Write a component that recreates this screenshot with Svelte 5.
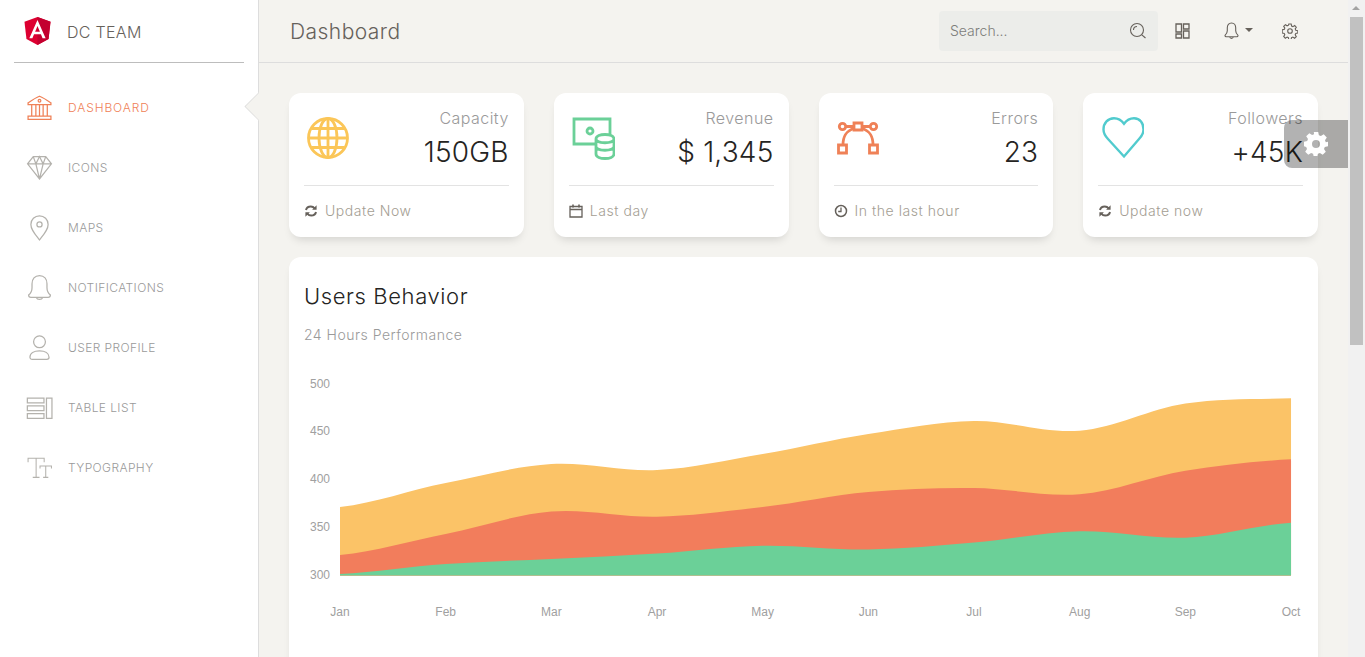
<script>
    const nav = ["Dashboard", "Icons", "Maps", "Notifications", "User Profile", "Table List", "Typography"]

    const stats = [
        { label: "Capacity", value: "150GB", foot: "Update Now", icon: "globe", footIcon: "refresh" },
        { label: "Revenue", value: "$ 1,345", foot: "Last day", icon: "money", footIcon: "calendar" },
        { label: "Errors", value: "23", foot: "In the last hour", icon: "vector", footIcon: "clock" },
        { label: "Followers", value: "+45K", foot: "Update now", icon: "heart", footIcon: "refresh" }
    ]

    const months = ["Jan", "Feb", "Mar", "Apr", "May", "Jun", "Jul", "Aug", "Sep", "Oct"]
    const ticks = [[500, 13], [450, 60.5], [400, 108.5], [350, 156.5], [300, 204.5]]

    // y positions of each stacked series, read off the picture
    const series = [
        { color: "#fbc367", ys: [137, 113, 94, 100, 84, 64, 51, 60.7, 33.5, 28.3] },
        { color: "#f27d5c", ys: [185, 164, 141.5, 146.7, 137, 122, 118, 124.3, 100.7, 89.3] },
        { color: "#6bd098", ys: [204, 194, 189, 183.5, 175.7, 179.5, 172.5, 161.3, 167.7, 152.7] }
    ]

    const stepX = 105.67
    const baseY = 205.5
    const pointX = i => 36 + i * stepX

    function area(ys) {
        let d = `M${pointX(0)} ${baseY}L${pointX(0)} ${ys[0]}`
        for (let i = 0; i < ys.length - 1; i++) {
            const prev = ys[Math.max(i - 1, 0)]
            const next = ys[Math.min(i + 2, ys.length - 1)]
            const c1 = ys[i] + (ys[i + 1] - prev) * 0.16
            const c2 = ys[i + 1] - (next - ys[i]) * 0.16
            d += `C${pointX(i) + stepX / 3} ${c1} ${pointX(i + 1) - stepX / 3} ${c2} ${pointX(i + 1)} ${ys[i + 1]}`
        }
        return d + `L${pointX(ys.length - 1)} ${baseY}Z`
    }
</script>

{#snippet navIcon(i)}
    <svg class="nav-icon" viewBox="0 0 26 26" fill="none" stroke="currentColor" stroke-width="1.2">
        {#if i === 0}
            <path d="M2 8.500C5 6.500 9 3.800 13 2.200c4 1.600 8 4.300 11 6.300v1.700H2zM3.500 21.200h19M2 24.400h22V21.200H2zM5.500 10.200v11M9.500 10.200v11M13 10.200v11M16.500 10.200v11M20.500 10.200v11"/>
            <circle cx="13" cy="6.500" r="1.300"/>
        {:else if i === 1}
            <path d="M7 2.500h12l5.500 7L13 24 1.500 9.500zM1.500 9.500h23M7 2.500l2.500 7L13 24l3.500-14.500 2.500-7M9.500 9.500 13 2.500l3.500 7"/>
        {:else if i === 2}
            <path d="M13 25C8 18.500 4.700 14.800 4.700 10a8.300 8.300 0 0 1 16.600 0c0 4.800-3.300 8.500-8.300 15z"/>
            <circle cx="13" cy="10" r="2.500"/>
        {:else if i === 3}
            <path d="M13 1.500c-4.600 0-7.200 3.500-7.200 8v3.800c0 3.200-1.300 5.400-3.300 7 0 1.500 1 2.200 2.200 2.200h16.600c1.200 0 2.200-.7 2.200-2.200-2-1.600-3.300-3.800-3.300-7V9.500c0-4.500-2.600-8-7.200-8zM10 22.700c.7 2.300 5.300 2.300 6 0"/>
        {:else if i === 4}
            <circle cx="13" cy="7.500" r="5.700"/>
            <path d="M3.800 22.500c0-4 4-6.300 9.200-6.300s9.200 2.300 9.200 6.300c0 1.200-1 2-2.200 2H6c-1.200 0-2.200-.8-2.200-2z"/>
        {:else if i === 5}
            <path stroke-width="1.200" d="M1.300 4h16v4.600h-16zM1.300 11.400h16v4.600h-16zM1.300 18.800h16v4.600h-16zM19.700 4H25v19.400h-5.300z"/>
        {:else}
            <path stroke-width="1" d="M2 8V4h15.500v4M9.750 4v18M6.500 22.500h6.500M13.500 14v-2.500h11V14M19 11.500v11M16.500 22.500h5"/>
        {/if}
    </svg>
{/snippet}

{#snippet statIcon(name)}
    <svg class="stat-icon" viewBox="0 0 44 44" fill="none" stroke-width="2.800">
        {#if name === "globe"}
            <g stroke="#fbc658">
                <circle cx="22" cy="22" r="19.500"/>
                <ellipse cx="22" cy="22" rx="9" ry="19.500"/>
                <path d="M22 3v38M3 22h38M6 12.500h32M6 31.500h32"/>
            </g>
        {:else if name === "money"}
            <g stroke="#6bd098">
                <path d="M26 28H3V3h36v15"/>
                <circle cx="19" cy="15" r="3"/>
                <path d="M25 23c0-6 18-6 18 0v15c0 6-18 6-18 0zM25 23c0 5 18 5 18 0M25 30.500c0 5 18 5 18 0"/>
            </g>
        {:else if name === "vector"}
            <g stroke="#ef8157">
                <path d="M10 10.500h8M26 10.500h8M7 29C7 20 10 15 18 12.500M37 29c0-9-3-14-11-16.500"/>
                <circle cx="6.500" cy="10.500" r="3.200"/>
                <circle cx="37.500" cy="10.500" r="3.200"/>
                <path d="M18 7h8v7h-8zM2.500 29h8v8h-8zM33.500 29h8v8h-8z"/>
            </g>
        {:else}
            <path stroke="#51cbce" stroke-width="2.400" d="M24 40.500 8 23C5 19.800 3.500 17 3.500 13.500 3.500 7 8 2.200 14 2.200c4 0 7.500 2 10 5.500 2.500-3.500 6-5.500 10-5.500 6 0 9.500 4.800 9.500 11.300 0 3.500-1.500 6.300-4.500 9.500z"/>
        {/if}
    </svg>
{/snippet}

{#snippet footIcon(name)}
    <svg class="foot-icon" viewBox="0 0 14 14" fill="none" stroke="#66615b" stroke-width="1.300">
        {#if name === "refresh"}
            <path stroke-width="2" d="M2 6c.5-2.200 2.400-3.600 4.800-3.600 1.700 0 3 .8 3.900 1.900M12 8c-.5 2.200-2.400 3.600-4.800 3.600-1.700 0-3-.8-3.900-1.900"/>
            <path fill="#66615b" stroke="none" d="M12.600 1.200v4.500H8.100zM1.400 12.800V8.300h4.500z"/>
        {:else if name === "calendar"}
            <path d="M1 2.500h12V13H1zM1 5.500h12"/>
            <path stroke-width="1.600" d="M4 .5v3M10 .5v3"/>
        {:else}
            <circle cx="7" cy="7" r="5.500" stroke-width="1.500"/>
            <path d="M7 3.500V7.500H4.200"/>
        {/if}
    </svg>
{/snippet}

<div class="shell">
    <aside class="sidebar">
        <div class="brand">
            <svg class="logo" viewBox="31 30 188 200">
                <polygon fill="#dd0031" points="125,30 31.900,63.200 46.100,186.300 125,230 203.900,186.300 218.100,63.200"/>
                <polygon fill="#c3002f" points="125,30 125,230 203.900,186.300 218.100,63.200"/>
                <path fill="#fff" d="M125 52.100 66.800 182.600h21.700l11.700-29.200h49.400l11.700 29.200h21.700zM142 135.400h-34l17-40.900z"/>
            </svg>
            <span>DC TEAM</span>
        </div>
        <nav>
            {#each nav as item, i}
                <div class="nav-item" class:active={i === 0}>
                    {@render navIcon(i)}
                    <span>{item}</span>
                </div>
            {/each}
        </nav>
    </aside>

    <main class="main">
        <header class="topbar">
            <div class="title">Dashboard</div>
            <div class="search">
                <span>Search...</span>
                <svg viewBox="0 0 18 18" fill="none" stroke="#66615b" stroke-width="1.100">
                    <circle cx="8" cy="8" r="6.500"/>
                    <path d="M4.500 8A3.500 3.500 0 0 1 8 4.500M12.800 12.800 16.500 16"/>
                </svg>
            </div>
            <div class="top-icons">
                <svg class="ti-layout" viewBox="0 0 15 16" fill="none" stroke="#66615b" stroke-width="1.300">
                    <path d="M1 1h5.500v8H1zM8.500 1H14v5H8.500zM1 11h5.500v4H1zM8.500 8H14v7H8.500z"/>
                </svg>
                <div class="ti-bell">
                    <svg viewBox="0 0 15 18" fill="none" stroke="#66615b" stroke-width="1.100">
                        <path d="M7.500 1C4.800 1 3.300 3 3.300 5.800v3c0 2-.8 3.200-2.300 4.600 0 .9.500 1.300 1.300 1.300h10.400c.8 0 1.300-.4 1.300-1.300-1.500-1.400-2.300-2.600-2.300-4.600v-3C11.700 3 10.200 1 7.500 1zM5.700 15c.4 1.800 3.200 1.800 3.600 0"/>
                    </svg>
                    <i class="caret"></i>
                </div>
                <svg class="ti-gear" viewBox="0 0 16 16" fill="none" stroke="#66615b" stroke-width="1.100">
                    <circle cx="8" cy="8" r="2.300"/>
                    <path d="M6.800 1h2.400l.4 2 1.300.6 1.800-1.100 1.600 1.700-1.100 1.700.6 1.400 2 .4v2.400l-2 .4-.6 1.300 1.100 1.800-1.700 1.600-1.700-1.100-1.400.6-.4 2H6.800l-.4-2-1.300-.6-1.800 1.100-1.600-1.700 1.100-1.700-.6-1.400-2-.4V6.800l2-.4.6-1.300-1.100-1.800 1.700-1.600 1.700 1.100 1.400-.6z"/>
                </svg>
            </div>
        </header>

        <section class="content">
            <div class="stats">
                {#each stats as s}
                    <div class="card stat">
                        <div class="stat-body">
                            {@render statIcon(s.icon)}
                            <div class="numbers">
                                <div class="label">{s.label}</div>
                                <div class="value">{s.value}</div>
                            </div>
                        </div>
                        <hr />
                        <div class="foot">
                            {@render footIcon(s.footIcon)}
                            <span>{s.foot}</span>
                        </div>
                    </div>
                {/each}
            </div>

            <div class="card chart-card">
                <h4>Users Behavior</h4>
                <p>24 Hours Performance</p>
                <svg class="chart" width="1000" height="270">
                    {#each series as s}
                        <path d={area(s.ys)} fill={s.color} />
                    {/each}
                    {#each ticks as t}
                        <text x="26" y={t[1] + 4.500} text-anchor="end">{t[0]}</text>
                    {/each}
                    {#each months as m, i}
                        <text x={pointX(i)} y="246" text-anchor="middle">{m}</text>
                    {/each}
                </svg>
            </div>
        </section>
    </main>

    <div class="scrollbar">
        <i class="arrow"></i>
        <div class="thumb"></div>
    </div>

    <div class="fixed-plugin">
        <svg viewBox="0 0 24 24"><path fill="#fff" fill-rule="evenodd" d="M9.800 0h4.400l.7 3.300 2 .8 2.800-1.800 3.100 3.100-1.800 2.800.8 2L24 9.800v4.400l-3.200.7-.8 2 1.800 2.800-3.100 3.100-2.800-1.800-2 .8-.7 3.200H9.800l-.7-3.200-2-.8-2.800 1.800-3.100-3.100 1.800-2.800-.8-2L0 14.200V9.800l3.200-.7.8-2-1.800-2.800 3.100-3.100 2.800 1.800 2-.8zM12 8a4 4 0 1 0 0 8 4 4 0 0 0 0-8z"/></svg>
    </div>
</div>

<style>
    :global(body) {
        overflow: hidden;
        font-family: Inter, "Liberation Sans", sans-serif;
        font-weight: 300;
    }
    .shell {
        display: flex;
        position: relative;
        height: 657px;
        overflow: hidden;
        background: #f4f3ef;
        color: #66615b;
    }

    .sidebar {
        width: 258px;
        flex-shrink: 0;
        background: #fff;
        border-right: 1px solid #ddd;
    }
    .brand {
        display: flex;
        align-items: center;
        gap: 16px;
        margin: 0 14px;
        padding: 2px 0 0 10px;
        height: 60px;
        border-bottom: 1px solid #bdbdbd;
        font-size: 16px;
        letter-spacing: .3px;
    }
    .logo {
        width: 27px;
        height: 28px;
        margin-bottom: 2px;
    }
    nav {
        display: flex;
        flex-direction: column;
        padding-top: 14px;
    }
    .nav-item {
        position: relative;
        display: flex;
        align-items: center;
        gap: 15px;
        height: 60px;
        padding-left: 26px;
        color: #9a9a9a;
        font-size: 12px;
        letter-spacing: .4px;
        text-transform: uppercase;
    }
    .nav-icon {
        width: 27px;
        height: 27px;
        color: #b4b2ad;
    }
    .nav-item.active,
    .nav-item.active .nav-icon {
        color: #ef8157;
    }
    .nav-item.active span {
        letter-spacing: .9px;
    }
    .nav-item.active::after {
        content: "";
        position: absolute;
        right: -1px;
        top: 50%;
        width: 21px;
        height: 21px;
        margin-top: -11px;
        transform: translateX(10.500px) rotate(45deg);
        background: #f4f3ef;
        border: 1px solid #ddd;
        box-sizing: border-box;
        clip-path: polygon(0 0, 0 100%, 100% 100%);
    }

    .main {
        flex: 1;
        min-width: 0;
    }
    .topbar {
        display: flex;
        align-items: center;
        height: 62px;
        border-bottom: 1px solid #ddd;
        padding-left: 31px;
    }
    .title {
        flex: 1;
        font-size: 21px;
        letter-spacing: .45px;
    }
    .search {
        display: flex;
        align-items: center;
        justify-content: space-between;
        width: 219px;
        height: 40px;
        box-sizing: border-box;
        padding: 0 11px;
        background: #ecedea;
        border-radius: 4px;
        color: #7d7d7a;
        font-size: 14px;
    }
    .search span {
        padding-bottom: 1px;
    }
    .search svg {
        width: 18px;
        height: 18px;
    }
    .top-icons {
        display: flex;
        align-items: center;
        width: 190px;
        padding-left: 17px;
        box-sizing: border-box;
    }
    .ti-layout {
        width: 15px;
        height: 16px;
    }
    .ti-bell {
        display: flex;
        align-items: center;
        gap: 6px;
        margin-left: 34px;
    }
    .ti-bell svg {
        width: 15px;
        height: 18px;
    }
    .caret {
        width: 0;
        height: 0;
        margin-bottom: 3px;
        border: 4px solid transparent;
        border-top-color: #66615b;
        border-bottom: 0;
    }
    .ti-gear {
        width: 16px;
        height: 16px;
        margin-left: 29px;
    }

    .content {
        display: flex;
        flex-direction: column;
        gap: 20px;
        padding: 30px 30px 0;
    }
    .stats {
        display: grid;
        grid-template-columns: repeat(4, 1fr);
        gap: 30px;
    }
    .card {
        background: #fff;
        border-radius: 12px;
        box-shadow: 0 6px 10px -4px rgba(0, 0, 0, .15);
    }
    .stat {
        display: flex;
        flex-direction: column;
        height: 144px;
        padding: 0 15px;
        box-sizing: border-box;
    }
    .stat-body {
        display: flex;
        justify-content: space-between;
        align-items: flex-start;
        height: 92px;
    }
    .stat-icon {
        width: 44px;
        height: 44px;
        margin: 23px 0 0 2px;
    }
    .numbers {
        text-align: right;
        padding-top: 16px;
    }
    .label {
        font-size: 16px;
        line-height: 19px;
        color: #9a9a9a;
        letter-spacing: .45px;
    }
    .value {
        margin-top: 7px;
        font-size: 28px;
        line-height: 34px;
        color: #252422;
        letter-spacing: .2px;
    }
    hr {
        width: 100%;
        margin: 0;
        border: 0;
        border-top: 1px solid #e3e3e3;
    }
    .foot {
        display: flex;
        align-items: center;
        gap: 7px;
        height: 49px;
        padding-bottom: 2px;
        color: #a49e93;
        font-size: 14px;
        letter-spacing: .55px;
    }
    .foot-icon {
        width: 14px;
        height: 14px;
    }

    .chart-card {
        height: 500px;
        padding: 25px 15px 0;
    }
    h4 {
        margin: 0;
        font-size: 22px;
        font-weight: 300;
        line-height: 28px;
        color: #252422;
        letter-spacing: .6px;
    }
    p {
        margin: 15px 0 0;
        font-size: 14px;
        line-height: 20px;
        color: #9a9a9a;
        letter-spacing: .5px;
    }
    .chart {
        display: block;
        margin-top: 25px;
    }
    .chart text {
        font-family: "Liberation Sans", sans-serif;
        font-weight: 400;
        font-size: 12px;
        fill: #a0a0a0;
    }

    .scrollbar {
        position: relative;
        width: 17px;
        flex-shrink: 0;
        background: #f1f1f1;
    }
    .arrow {
        position: absolute;
        top: 6px;
        left: 4px;
        width: 0;
        height: 0;
        border: 4.500px solid transparent;
        border-bottom-color: #a3a3a3;
        border-top: 0;
    }
    .thumb {
        margin: 17px 2px 0;
        height: 328px;
        background: #c1c1c1;
    }

    .fixed-plugin {
        position: absolute;
        top: 120px;
        right: 17px;
        display: flex;
        align-items: center;
        justify-content: center;
        width: 64px;
        height: 48px;
        background: rgba(0, 0, 0, .3);
        border-radius: 8px 0 0 8px;
    }
    .fixed-plugin svg {
        width: 24px;
        height: 24px;
    }
</style>
